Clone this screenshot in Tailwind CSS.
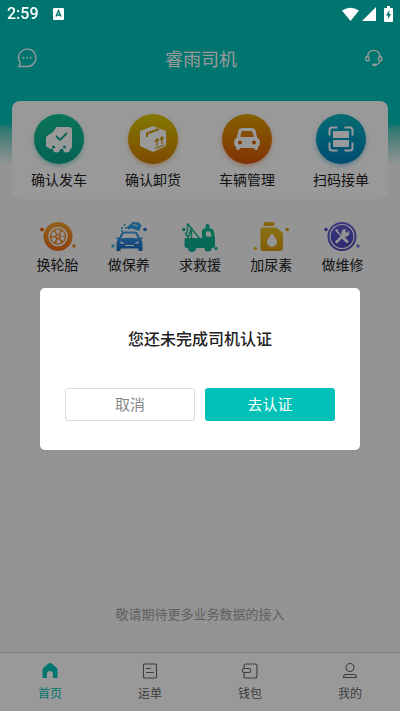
<!DOCTYPE html>
<html lang="zh-CN">
<head>
<meta charset="utf-8">
<meta name="viewport" content="width=device-width, initial-scale=1">
<title>睿雨司机</title>
<script src="https://cdn.jsdelivr.net/npm/@tailwindcss/browser@4"></script>
</head>
<body class="bg-[#f7f7f7] font-['Noto_Sans_CJK_SC',sans-serif] text-[#222]">
<svg class="absolute size-0" aria-hidden="true">
  <defs>
    <linearGradient id="green" x2="0" y2="1"><stop stop-color="#12bd91"/><stop offset="1" stop-color="#0cab90"/></linearGradient>
    <linearGradient id="tyre" x2="0" y2="1"><stop stop-color="#f2a22c"/><stop offset="1" stop-color="#ec6c18"/></linearGradient>
    <linearGradient id="blue" x2="0" y2="1"><stop stop-color="#35a3e8"/><stop offset="1" stop-color="#1b66c4"/></linearGradient>
    <linearGradient id="gold" x2="0" y2="1"><stop stop-color="#e3bb20"/><stop offset="1" stop-color="#dc9a12"/></linearGradient>
    <linearGradient id="violet" x2="0" y2="1"><stop stop-color="#5f5cd0"/><stop offset="1" stop-color="#4a45b8"/></linearGradient>
  </defs>
</svg>

<div class="flex min-h-screen flex-col">
  <header class="h-[165px] shrink-0 bg-linear-to-b from-[#00c1b7] from-75% to-[#f7f7f7]">
    <div class="flex items-center justify-between px-4 pt-11">
      <button aria-label="消息" class="text-white">
        <svg class="size-[22px]" viewBox="-1 -1 22 22" fill="none" stroke="currentColor" stroke-width="1.3"><path d="M1.500 18.500h8.700A8.700 8.700 0 1 0 3.500 15.300z" stroke-linejoin="round"/><g fill="currentColor" stroke="none"><circle cx="6.300" cy="9.700" r="1"/><circle cx="10" cy="9.700" r="1"/><circle cx="13.700" cy="9.700" r="1"/></g></svg>
      </button>
      <h1 class="text-lg leading-7 text-white">睿雨司机</h1>
      <button aria-label="客服" class="text-white">
        <svg class="size-5" viewBox="0 0 20 20" fill="none" stroke="currentColor" stroke-width="1.3"><path d="M3.700 8.500C4 4.500 6.400 2.300 9.800 2.300s5.800 2.200 6.100 6.200M16 12.500c-.3 2.200-1.500 3.600-3.600 4.100"/><ellipse cx="3.500" cy="10.700" rx="1.700" ry="2.200"/><ellipse cx="16.200" cy="10.700" rx="1.700" ry="2.200"/><ellipse cx="10.600" cy="16.800" rx="1.800" ry=".7"/></svg>
      </button>
    </div>
  </header>

  <main class="-mt-16 flex grow flex-col px-3">
    <nav aria-label="业务" class="grid grid-cols-4 rounded-lg bg-white pt-[13px] pb-2">
      <a href="#" class="flex flex-col items-center gap-[3px]">
        <span class="flex size-[50px] items-center justify-center rounded-full bg-linear-to-b from-[#12c292] to-[#08a48d] shadow-[0_2px_4px_#08a48d66]">
          <svg class="size-7" viewBox="0 0 28 28"><path fill="#fff" d="M11.500 2H24a3 3 0 0 1 3 3v17q0 2-2 2a3.500 3.500 0 0 1-7 0h-3a3.500 3.500 0 0 1-7 0h-1q-3-.2-5-2-1-.6-1-2v-7q0-1.500 1.300-2.300L8 7z"/><path d="m11 11 4 4 7-7" fill="none" stroke="#0cab90" stroke-width="1.800"/><g fill="#0cab90"><circle cx="8.500" cy="22" r="1.600"/><circle cx="19.500" cy="22" r="1.600"/></g></svg>
        </span>
        <span class="text-sm leading-6">确认发车</span>
      </a>
      <a href="#" class="flex flex-col items-center gap-[3px]">
        <span class="flex size-[50px] items-center justify-center rounded-full bg-linear-to-b from-[#d9c900] to-[#d27b00] shadow-[0_2px_4px_#d27b0066]">
          <svg class="size-7" viewBox="0 0 28 28"><path fill="#fff" d="M14 1 27 6v15l-13 6L1 21V6z"/><path d="M20 4 8 8.500v3.500" fill="none" stroke="#d3a100" stroke-width="2"/><path d="M16 23.500 25.500 20M18 21v-6m-2 2 2-3 2 1.500M23 19v-6m-2 2 2-3 2 1.500" fill="none" stroke="#d29000" stroke-width="1.300"/></svg>
        </span>
        <span class="text-sm leading-6">确认卸货</span>
      </a>
      <a href="#" class="flex flex-col items-center gap-[3px]">
        <span class="flex size-[50px] items-center justify-center rounded-full bg-linear-to-b from-[#dda000] to-[#d85208] shadow-[0_2px_4px_#d8520866]">
          <svg class="size-7" viewBox="0 0 28 28"><path fill="#fff" fill-rule="evenodd" d="M9.500 3h9q3.500 0 4.200 3l1.300 6q3 2.500 3 5.500 0 3-2 4.500v1.200q0 1.800-2 1.800t-2-2H7q0 2-2 2t-2-1.800V22q-2-1.500-2-4.500Q1 14.500 4 12l1.300-6q.7-3 4.200-3m.5 3q-1.500 0-1.800 1.500L7.300 12h13.400l-.9-4.500Q19.500 6 18 6z"/><g fill="#da6504"><circle cx="7" cy="17.500" r="2"/><circle cx="21" cy="17.500" r="2"/></g></svg>
        </span>
        <span class="text-sm leading-6">车辆管理</span>
      </a>
      <a href="#" class="flex flex-col items-center gap-[3px]">
        <span class="flex size-[50px] items-center justify-center rounded-full bg-linear-to-b from-[#10b4bd] to-[#007fbe] shadow-[0_2px_4px_#007fbe66]">
          <svg class="size-7" viewBox="0 0 28 28"><path d="M10.500 2.500H5q-2.500 0-2.500 2.500v5.500m15-8H23q2.500 0 2.500 2.500v5.500m-23 7V23q0 2.500 2.500 2.500h5.500m15-8V23q0 2.500-2.500 2.500h-5.500" fill="none" stroke="#fff" stroke-width="2"/><path fill="#fff" d="M6 6h16v7H6zm0 9h16v7H6z"/></svg>
        </span>
        <span class="text-sm leading-6">扫码接单</span>
      </a>
    </nav>

    <nav aria-label="服务" class="mt-[21px] grid grid-cols-5 px-2.5">
      <a href="#" class="flex flex-col items-center">
        <svg class="h-8 w-9" viewBox="0 0 36 32"><circle cx="18" cy="16.500" r="14.500" fill="url(#tyre)"/><circle cx="18" cy="16.500" r="9" fill="none" stroke="#f7f7f7" stroke-width="1.500"/><circle cx="18" cy="16.500" r="5" fill="none" stroke="#f7f7f7" stroke-width="4" stroke-dasharray="3.700 1.536"/><circle cx="18" cy="16.500" r="1.300" fill="#f7f7f7"/><circle cx="2" cy="9.500" r="2" fill="#ec6418"/><circle cx="34" cy="26" r="1.800" fill="#ee8b1c"/></svg>
        <span class="text-sm leading-6">换轮胎</span>
      </a>
      <a href="#" class="flex flex-col items-center">
        <svg class="h-8 w-9" viewBox="0 0 36 32"><path fill="#2f9ce2" d="m16 7 4.500-3.500L21 2l7 .5 2.500 3-2.200 5.500-7.800-2.500-3.500 1z"/><path d="m22 4.500 5 1.500" stroke="#f7f7f7" fill="none"/><path fill="url(#blue)" fill-rule="evenodd" d="M13 11.500h11q2 0 2.700 1.500l2.300 5 2-.8q1.500.3.500 1.600l-1.500.7q1.500 1.500 1.500 4V31h-4v-2.500h-18V31h-4v-7.500q0-2.500 1.500-4L5.500 19q-1-1.500.5-1.800l2 .8 2.300-5q.7-1.500 2.700-1.500m.5 2q-1 0-1.500 1l-1.800 4q8.300-1.500 16.600 0l-1.800-4q-.5-1-1.500-1zM9 21.500q0 2.500 4 2.500 0-2-4-2.500m19 0q-4 .5-4 2.500 4 0 4-2.500M14 26h9v-1h-9z"/><g fill="#279be0"><circle cx="13.500" cy="5" r="1"/><circle cx="15" cy="8" r="1"/><circle cx="11" cy="8" r="1"/><circle cx="11" cy="11" r="1"/></g><circle cx="34" cy="9.500" r="1.800" fill="#2172d0"/><circle cx="2" cy="26" r="1.800" fill="#3ab7dc"/></svg>
        <span class="text-sm leading-6">做保养</span>
      </a>
      <a href="#" class="flex flex-col items-center">
        <svg class="h-8 w-9" viewBox="0 0 36 32"><path fill="url(#green)" fill-rule="evenodd" d="M4 18h16v-7q0-2 2-2.500h1.500V6q0-2 2-2t2 2v2.500h2q1.500 0 2 2l1.500 7V26q0 2-2 2h-1.500a3.500 3.500 0 0 1-7 0H14a4 4 0 0 1-8 0H5q-2.500 0-2.500-2.500v-6Q2.500 18 4 18m20-6.500v5h5.500l-1.300-5z"/><path d="m5.500 3.500 12 15M5.500 3.500v8m0 0-2 2.500 2 2.500 1.500-1.500M6 18l3.500-10v10" stroke="#12b98f" stroke-width="1.500" fill="none" stroke-linejoin="round"/><circle cx="1.800" cy="9.500" r="1.700" fill="#10a990"/><circle cx="34" cy="28.500" r="1.700" fill="#12bd91"/></svg>
        <span class="text-sm leading-6">求救援</span>
      </a>
      <a href="#" class="flex flex-col items-center">
        <svg class="h-8 w-9" viewBox="0 0 36 32"><g fill="url(#gold)"><rect x="10.500" y="2" width="11" height="4" rx="2"/><path d="M10 7.500h12q1 0 2 .7l5 3.800q1 .8 1 2V28q0 3-3 3H10.500q-3 0-3-3V10q0-2.500 2.500-2.500"/></g><path fill="#f7f7f7" d="M19 13.500q5 5.500 5 8.500a5 5 0 0 1-10 0q0-3 5-8.500"/><circle cx="35" cy="9.500" r="1.700" fill="#e3960e" transform="translate(-.7)"/><circle cx="2.500" cy="28.500" r="1.700" fill="#d8bd20"/></svg>
        <span class="text-sm leading-6">加尿素</span>
      </a>
      <a href="#" class="flex flex-col items-center">
        <svg class="h-8 w-9" viewBox="0 0 36 32"><circle cx="18" cy="16.500" r="14.500" fill="url(#violet)"/><circle cx="18" cy="16.500" r="12" fill="none" stroke="#f7f7f7" stroke-width="1.200"/><path d="m12.500 22 8.500-8.500" fill="none" stroke="#f7f7f7" stroke-width="2.600" stroke-linecap="round"/><path d="M24.500 10.500a4 4 0 1 1-3-1.500v3l2 1z" fill="#f7f7f7"/><path d="m12 10.500 6 6" stroke="#f7f7f7" stroke-width="1.500"/><path d="m18.500 17 4.500 4.500" stroke="#f7f7f7" stroke-width="3" stroke-linecap="round"/><path d="m11 10 2-1 1.500 2-1.500 1.500z" fill="#f7f7f7"/><circle cx="2" cy="9.500" r="1.700" fill="#4740b8"/><circle cx="34" cy="26" r="1.700" fill="#7672ce"/></svg>
        <span class="text-sm leading-6">做维修</span>
      </a>
    </nav>
    <p class="mt-auto mb-7 text-center text-[13px] leading-5 text-[#a0a0a0]">敬请期待更多业务数据的接入</p>
  </main>

  <nav aria-label="主导航" class="grid grid-cols-4 border-t border-[#ddd] bg-white pt-2 pb-2 text-[#666]">
    <a href="#" aria-current="page" class="flex flex-col items-center gap-0.5 text-[#00c1b7]">
      <svg class="size-5" viewBox="0 0 20 20"><path fill="currentColor" d="M10 2q1 0 1.800.7l4.700 4q1 1 1 2V16q0 1-1 1H13v-4a3 3 0 0 0-6 0v4H3.500q-1 0-1-1V8.700q0-1 1-2l4.700-4Q9 2 10 2"/></svg>
      <span class="text-xs leading-5">首页</span>
    </a>
    <a href="#" class="flex flex-col items-center gap-0.5">
      <svg class="size-5" viewBox="0 0 20 20" fill="none" stroke="currentColor" stroke-width="1.100"><rect x="3.500" y="3" width="13" height="14" rx="1"/><path d="M6 7.500h5M6 11.500h8"/></svg>
      <span class="text-xs leading-5">运单</span>
    </a>
    <a href="#" class="flex flex-col items-center gap-0.5">
      <svg class="size-5" viewBox="0 0 20 20" fill="none" stroke="currentColor" stroke-width="1.100"><path d="M4 7V5q0-2 2-2h9q2 0 2 2v10q0 2-2 2H5q-1 0-1-1v-4"/><rect x="2.500" y="7.500" width="8" height="4" rx="1.500"/></svg>
      <span class="text-xs leading-5">钱包</span>
    </a>
    <a href="#" class="flex flex-col items-center gap-0.5">
      <svg class="size-5" viewBox="0 0 20 20" fill="none" stroke="currentColor" stroke-width="1.100"><circle cx="10" cy="6.500" r="4"/><path d="M6 13.500h8q2.500 0 2.500 3H3.500q0-3 2.500-3"/></svg>
      <span class="text-xs leading-5">我的</span>
    </a>
  </nav>
</div>

<div class="fixed inset-0 flex items-center justify-center bg-black/40 px-10 pt-[26px]">
  <section role="dialog" aria-modal="true" aria-labelledby="dialog-title" class="w-full rounded-[5px] bg-white px-[25px] pt-9 pb-[29px]">
    <h2 id="dialog-title" class="text-center text-base leading-7 font-medium">您还未完成司机认证</h2>
    <div class="mt-9 grid grid-cols-2 gap-2.5">
      <button class="h-[33px] rounded-[3px] border border-[#ddd] text-[15px] text-[#888]">取消</button>
      <button class="h-[33px] rounded-[3px] bg-[#00c1b7] text-[15px] text-white">去认证</button>
    </div>
  </section>
</div>

<div class="fixed inset-x-0 top-0 flex h-7 items-center px-[7px] text-white">
  <time class="font-[Roboto,sans-serif] text-base leading-5 font-medium">2:59</time>
  <svg class="ml-3.5 h-3 w-[11px]" viewBox="0 0 11 12"><rect width="11" height="12" rx="1" fill="currentColor"/><path d="m3 8.500 2.500-6 2.500 6M4 7h3" fill="none" stroke="#00746e" stroke-width="1.300"/></svg>
  <svg class="ml-auto h-4 w-[17px]" viewBox="0 0 17 16"><path fill="currentColor" d="M0 4.500Q8.500-1 17 4.500L8.500 15z"/></svg>
  <svg class="ml-[3px] size-[14px]" viewBox="0 0 14 14"><path fill="currentColor" d="M14 0v14H0z"/></svg>
  <svg class="ml-2 h-4 w-[9px]" viewBox="0 0 9 16"><path fill="currentColor" d="M3 0h3v2h2q1 0 1 1v12q0 1-1 1H1q-1 0-1-1V3q0-1 1-1h2z"/><path fill="#00746e" d="M5.500 4 2 9.500h2V13l3-5H5z"/></svg>
</div>
</body>
</html>
